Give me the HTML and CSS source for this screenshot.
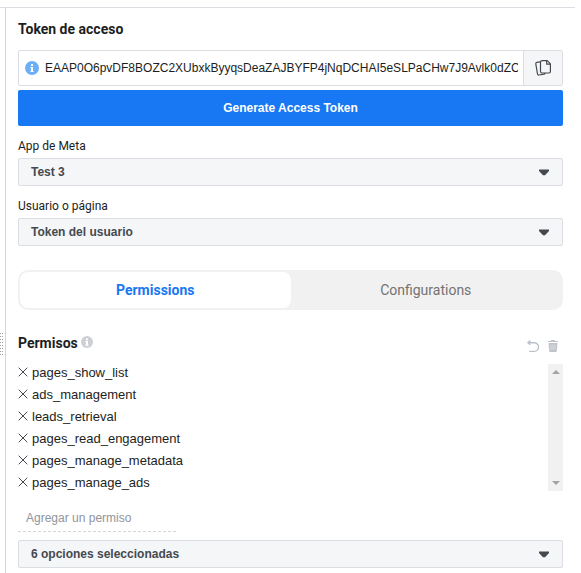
FILE: index.html
```html
<!DOCTYPE html>
<html lang="es">
<head>
<meta charset="utf-8">
<title>Token de acceso</title>
<link rel="stylesheet" href="styles.css">
</head>
<body>
<div class="explorer">
  <div class="gutter"><div class="grip"></div></div>
  <main class="panel">
    <h2 class="title">Token de acceso</h2>
    <div class="token">
      <svg class="token-info" width="14" height="14" viewBox="0 0 14 14"><circle cx="7" cy="7" r="7" fill="#6caff9"/><path d="M6 3h2v2H6zM5.4 6H8v4h.6v1H5.4v-1H6V7h-.6z" fill="#fff"/></svg>
      <div class="token-value">EAAP0O6pvDF8BOZC2XUbxkByyqsDeaZAJBYFP4jNqDCHAI5eSLPaCHw7J9Avlk0dZC</div>
      <button class="copy" aria-label="Copiar">
        <svg width="18" height="18" viewBox="0 0 18 18" fill="none" stroke="#444950" stroke-width="1.2" stroke-linejoin="round"><path d="M8.200 1.600h5L16.400 4.800v7.700q0 1.500-1.500 1.500H8q-1.500 0-1.500-1.500V3.100q0-1.500 1.700-1.500z"/><path d="M12.700 1.800v3.400h3.500"/><path d="M6.200 2.800l-3.400.6q-1.200.2-1 1.400l1.700 10.200q.2 1.200 1.400 1l5.200-.8q.9-.2 1.200-1.200"/></svg>
      </button>
    </div>
    <button class="generate">Generate Access Token</button>

    <div class="label">App de Meta</div>
    <div class="select"><span>Test 3</span><svg width="12" height="7" viewBox="0 0 12 7"><path d="M1 .5h10v1.500L7 6.300H5L1 2z" fill="#444950"/></svg></div>
    <div class="label">Usuario o página</div>
    <div class="select"><span>Token del usuario</span><svg width="12" height="7" viewBox="0 0 12 7"><path d="M1 .5h10v1.500L7 6.300H5L1 2z" fill="#444950"/></svg></div>

    <div class="tabs">
      <div class="tab active">Permissions</div>
      <div class="tab">Configurations</div>
    </div>

    <div class="perm-head">
      <h2 class="perm-title">Permisos</h2>
      <svg class="perm-info" width="12" height="12" viewBox="0 0 12 12"><circle cx="6" cy="6" r="6" fill="#ccd0d5"/><path d="M5 2.500h2v1.700H5zM4.300 5.100H7v3.600h.7v1H4.300v-1H5V6.100h-.7z" fill="#fff"/></svg>
      <div class="actions">
        <svg width="12" height="13" viewBox="0 0 12 13" fill="none" stroke="#bcc1c8" stroke-width="1.400"><path d="M3.400.6L.9 2.700l2.500 2.100M1 2.700h6.200a4.300 4.300 0 0 1 0 8.700H2.200"/></svg>
        <svg width="10" height="12" viewBox="0 0 10 12"><path d="M3 0h4v1h3v1H0V1h3zM.5 3h9l-.7 8q-.1 1-1 1H2.200q-.9 0-1-1z" fill="#bfc4ca"/><path d="M3 4.500v5.500M5 4.500v5.500M7 4.500v5.500" stroke="#e4e7ea" stroke-width=".8"/></svg>
      </div>
    </div>

    <div class="list-box">
      <ul class="list">
        <li><svg class="x" viewBox="0 0 10 10"><path d="M.7.7l8.600 8.600M9.300.7L.7 9.300"/></svg>pages_show_list</li>
        <li><svg class="x" viewBox="0 0 10 10"><path d="M.7.7l8.600 8.600M9.300.7L.7 9.300"/></svg>ads_management</li>
        <li><svg class="x" viewBox="0 0 10 10"><path d="M.7.7l8.600 8.600M9.300.7L.7 9.300"/></svg>leads_retrieval</li>
        <li><svg class="x" viewBox="0 0 10 10"><path d="M.7.7l8.600 8.600M9.300.7L.7 9.300"/></svg>pages_read_engagement</li>
        <li><svg class="x" viewBox="0 0 10 10"><path d="M.7.7l8.600 8.600M9.300.7L.7 9.300"/></svg>pages_manage_metadata</li>
        <li><svg class="x" viewBox="0 0 10 10"><path d="M.7.7l8.600 8.600M9.300.7L.7 9.300"/></svg>pages_manage_ads</li>
      </ul>
      <div class="scrollbar">
        <svg width="8" height="4" viewBox="0 0 8 4"><path d="M4 0l4 4H0z" fill="#a3a3a3"/></svg>
        <svg width="8" height="4" viewBox="0 0 8 4"><path d="M0 0h8L4 4z" fill="#a3a3a3"/></svg>
      </div>
    </div>

    <div class="add">Agregar un permiso</div>
    <div class="select"><span>6 opciones seleccionadas</span><svg width="12" height="7" viewBox="0 0 12 7"><path d="M1 .5h10v1.500L7 6.300H5L1 2z" fill="#444950"/></svg></div>
  </main>
</div>
</body>
</html>
```
FILE: styles.css
```css
* { box-sizing: border-box; }
body {
  margin: 0;
  height: 573px;
  overflow: hidden;
  background: #fff;
  color: #1c1e21;
  font-family: "Liberation Sans", Arial, sans-serif;
}
svg { display: block; flex: none; }
button { font: inherit; padding: 0; margin: 0; }
.explorer {
  display: flex;
  width: 575px;
  height: 566px;
  margin-top: 7px;
  border-top: 1px solid #dadde1;
}
.gutter { width: 5px; flex: none; height: 566px; }
.grip {
  width: 3px;
  height: 24px;
  margin-top: 325px;
  background-image: radial-gradient(circle at .5px .5px, #a0a0a0 .6px, transparent .7px);
  background-size: 2px 3px;
}
.panel {
  flex: 1;
  min-width: 0;
  height: 566px;
  border-left: 1px solid #d3d6db;
  padding: 12px 12px 0;
}
.title, .perm-title {
  margin: 0;
  font: 700 14px/18px Roboto, sans-serif;
}
.token {
  display: flex;
  align-items: center;
  height: 36px;
  margin-top: 12px;
  padding-left: 6px;
  border: 1px solid #dadde1;
  border-radius: 2px;
}
.token-value {
  flex: 1;
  min-width: 0;
  margin: 0 5px 0 6px;
  overflow: hidden;
  white-space: nowrap;
  font-size: 12px;
  line-height: 16px;
}
.copy {
  display: flex;
  align-items: center;
  justify-content: flex-start;
  width: 39px;
  height: 34px;
  padding-left: 10px;
  flex: none;
  border: 0;
  border-left: 1px solid #dadde1;
  background: #f5f6f7;
}
.generate {
  display: block;
  width: 100%;
  height: 36px;
  margin-top: 4px;
  border: 0;
  border-radius: 2px;
  background: #1877f2;
  color: #fff;
  font-size: 12px;
  font-weight: 700;
}
.label { font: 12px/16px Roboto, sans-serif; margin: 12px 0 4px; }
.select {
  display: flex;
  align-items: center;
  justify-content: space-between;
  height: 28px;
  padding: 0 12px;
  border: 1px solid #dadde1;
  border-radius: 2px;
  background: #f5f6f7;
  color: #444950;
  font-size: 12px;
  font-weight: 700;
}
.tabs {
  display: flex;
  height: 40px;
  margin-top: 24px;
  padding: 2px;
  border-radius: 10px;
  background: #f1f1f1;
}
.tab {
  flex: 1;
  font: 400 14px/36px Roboto, sans-serif;
  text-align: center;
  color: #737373;
  border-radius: 8px;
}
.tab.active { background: #fff; color: #1877f2; font-weight: 700; }
.perm-head { display: flex; align-items: flex-start; margin-top: 24px; height: 30px; }
.perm-info { margin: 2px 0 0 3px; }
.actions { display: flex; gap: 9px; margin: 6px 5px 0 auto; }
.list-box { display: flex; justify-content: space-between; height: 127px; }
.list { list-style: none; margin: -3px 0 0; padding: 0; }
.list li {
  display: flex;
  align-items: center;
  gap: 4px;
  height: 22px;
  font-size: 13px;
}
.x {
  width: 10px;
  height: 10px;
  fill: none;
  stroke: #444950;
}
.scrollbar {
  display: flex;
  flex-direction: column;
  align-items: center;
  justify-content: space-between;
  width: 15px;
  padding: 6px 0;
  background: #f1f1f1;
}
.add {
  width: 158px;
  height: 27px;
  margin: 14px 0 8px;
  padding-left: 8px;
  border-bottom: 1px dashed #d3d6db;
  color: #90949c;
  font-size: 12px;
  line-height: 26px;
}
```
